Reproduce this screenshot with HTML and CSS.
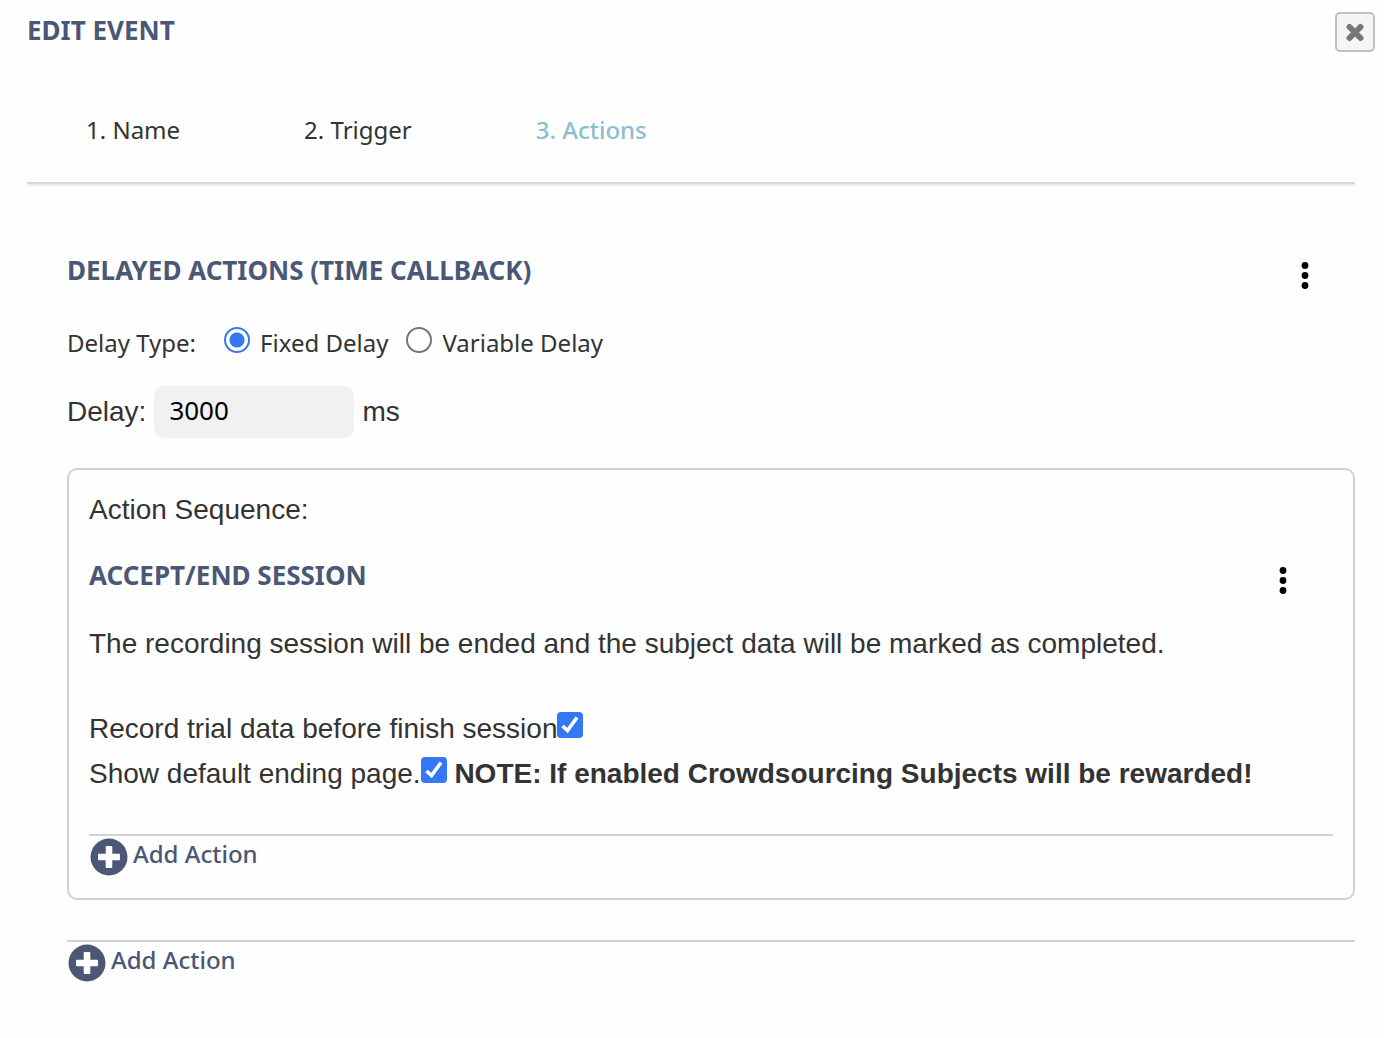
FILE: index.html
```
<!DOCTYPE html>
<html lang="en">
<head>
  <meta charset="UTF-8" />
  <meta name="viewport" content="width=device-width, initial-scale=1.0"/>
  <title>Edit Event</title>
  <link rel="stylesheet" href="styles.css">
</head>
<body>
  <div class="dialog">
    <header class="dialog-header">
      <h1 class="heading">EDIT EVENT</h1>
      <button type="button" class="close-btn" aria-label="Close">
        <svg width="20" height="20" viewBox="0 0 20 20"><path d="M4.5 5L15.5 16M15.5 5L4.5 16"/></svg>
      </button>
    </header>

    <!-- steps -->
    <nav class="steps">
      <a href="#name">1. Name</a>
      <a href="#trigger">2. Trigger</a>
      <a href="#actions" class="active">3. Actions</a>
    </nav>

    <main class="content">
      <div class="section-header">
        <h2 class="heading">DELAYED ACTIONS (TIME CALLBACK)</h2>
        <button type="button" class="menu-btn" aria-label="Section menu">
          <svg width="8" height="28" viewBox="0 0 8 28"><circle cx="4" cy="4.5" r="3.4"/><circle cx="4" cy="14.5" r="3.4"/><circle cx="4" cy="24.5" r="3.4"/></svg>
        </button>
      </div>

      <div class="delay-type">
        <span class="delay-label">Delay Type:</span>
        <input type="radio" id="fixed" name="delayType" checked>
        <label for="fixed">Fixed Delay</label>
        <input type="radio" id="variable" name="delayType">
        <label for="variable">Variable Delay</label>
      </div>

      <div class="delay">
        <label for="delay">Delay:</label>
        <input type="text" id="delay" name="delay" value="3000">
        <span>ms</span>
      </div>

      <section class="sequence">
        <p>Action Sequence:</p>

        <div class="section-header">
          <h3 class="heading">ACCEPT/END SESSION</h3>
          <button type="button" class="menu-btn" aria-label="Action menu">
            <svg width="8" height="28" viewBox="0 0 8 28"><circle cx="4" cy="4.5" r="3.4"/><circle cx="4" cy="14.5" r="3.4"/><circle cx="4" cy="24.5" r="3.4"/></svg>
          </button>
        </div>

        <p class="description">The recording session will be ended and the subject data will be marked as completed.</p>

        <div class="option">
          <label for="record">Record trial data before finish session</label><input type="checkbox" id="record" checked>
        </div>
        <div class="option">
          <label for="ending">Show default ending page.</label><input type="checkbox" id="ending" checked>
          <strong>NOTE: If enabled Crowdsourcing Subjects will be rewarded!</strong>
        </div>

        <div class="add-row">
          <button type="button" class="add-btn">
            <svg width="38" height="38" viewBox="0 0 38 38"><circle cx="19" cy="19" r="18.5"/><rect x="15.7" y="8" width="6.6" height="22" rx="1"/><rect x="8" y="15.7" width="22" height="6.6" rx="1"/></svg>
            Add Action
          </button>
        </div>
      </section>

      <div class="add-row">
        <button type="button" class="add-btn">
          <svg width="38" height="38" viewBox="0 0 38 38"><circle cx="19" cy="19" r="18.5"/><rect x="15.7" y="8" width="6.6" height="22" rx="1"/><rect x="8" y="15.7" width="22" height="6.6" rx="1"/></svg>
          Add Action
        </button>
      </div>
    </main>
  </div>
</body>
</html>
```
FILE: styles.css
```
* {
  box-sizing: border-box;
}

body {
  margin: 0;
  background: #fefefe;
  color: #333;
  font-family: "Liberation Sans", Arial, sans-serif;
  font-size: 28px;
  line-height: 32px;
}

p {
  margin: 0;
}

button {
  padding: 0;
  border: none;
  background: none;
  cursor: pointer;
}

svg {
  display: block;
}

.heading {
  margin: 0;
  color: #4a5775;
  font-family: "Noto Sans", sans-serif;
  font-size: 26px;
  font-weight: 700;
  line-height: 36px;
}

.dialog-header {
  display: flex;
  justify-content: space-between;
  align-items: flex-start;
  padding: 12px 9px 0 27px;
}

.close-btn {
  display: flex;
  align-items: center;
  justify-content: center;
  width: 40px;
  height: 40px;
  border: 2px solid #c0c0c0;
  border-radius: 5px;
  background: #f5f5f5;
}

.close-btn path {
  stroke: #777;
  stroke-width: 6;
  stroke-linecap: round;
}

/* steps */
.steps {
  display: flex;
  gap: 124px;
  margin: 0 29px 0 27px;
  padding: 60px 59px 34px;
  border-bottom: 2px solid #d9d9d9;
  box-shadow: 0 2px 0 #eee;
  font-family: "Noto Sans", sans-serif;
  font-size: 24px;
  line-height: 36px;
}

.steps a {
  color: #333;
  text-decoration: none;
}

.steps .active {
  color: #8abfd3;
  font-weight: 500;
}

.content {
  padding: 67px 29px 40px 67px;
}

.section-header {
  display: flex;
  justify-content: space-between;
  align-items: flex-end;
  padding-right: 46px;
}

.section-header .heading {
  line-height: 38px;
}

/* delay settings */
.delay-type {
  display: flex;
  align-items: center;
  margin-top: 36px;
  font-family: "Noto Sans", sans-serif;
  font-size: 24px;
  line-height: 36px;
}

.delay-label {
  margin-right: 28px;
}

.delay-type label {
  margin: 0 18px 0 10px;
}

input[type="radio"] {
  appearance: none;
  width: 26px;
  height: 26px;
  margin: 0 0 6px;
  border: 2px solid #767676;
  border-radius: 50%;
  background: #fff;
}

input[type="radio"]:checked {
  border-color: #3478f6;
  background: radial-gradient(circle, #3478f6 7px, #fff 8px);
}

.delay {
  display: flex;
  align-items: center;
  gap: 8px;
  margin-top: 25px;
}

.delay input {
  width: 200px;
  height: 52px;
  padding: 0 15px 4px;
  border: none;
  border-radius: 10px;
  background: #f1f1f4;
  color: #000;
  font-family: "Noto Sans", sans-serif;
  font-size: 26px;
}

/* action sequence */
.sequence {
  margin: 30px 0 40px;
  padding: 24px 20px 22px;
  border: 2px solid #d2d2d2;
  border-radius: 10px;
}

.sequence .section-header {
  margin: 30px 0 34px;
}

.description {
  margin-bottom: 46px;
}

.option {
  line-height: 45px;
}

input[type="checkbox"] {
  appearance: none;
  width: 26px;
  height: 26px;
  margin: 0;
  border-radius: 4px;
  background: #fff;
  vertical-align: baseline;
}

input[type="checkbox"]:checked {
  background: #3478f6 url("data:image/svg+xml,%3Csvg xmlns='http://www.w3.org/2000/svg' viewBox='0 0 26 26'%3E%3Cpath d='M5.5 14L10.5 18.5L20 5.5' fill='none' stroke='white' stroke-width='3.6'/%3E%3C/svg%3E");
}

.add-row {
  border-top: 2px solid #d2d2d2;
  padding-top: 2px;
}

.sequence .add-row {
  margin-top: 38px;
}

.add-btn {
  display: flex;
  gap: 5px;
  padding-left: 1px;
  color: #4a5775;
  font-family: "Noto Sans", sans-serif;
  font-size: 24px;
  font-weight: 500;
  line-height: 32px;
}

.add-btn circle {
  fill: #4a5775;
}

.add-btn rect {
  fill: #fff;
}
```
